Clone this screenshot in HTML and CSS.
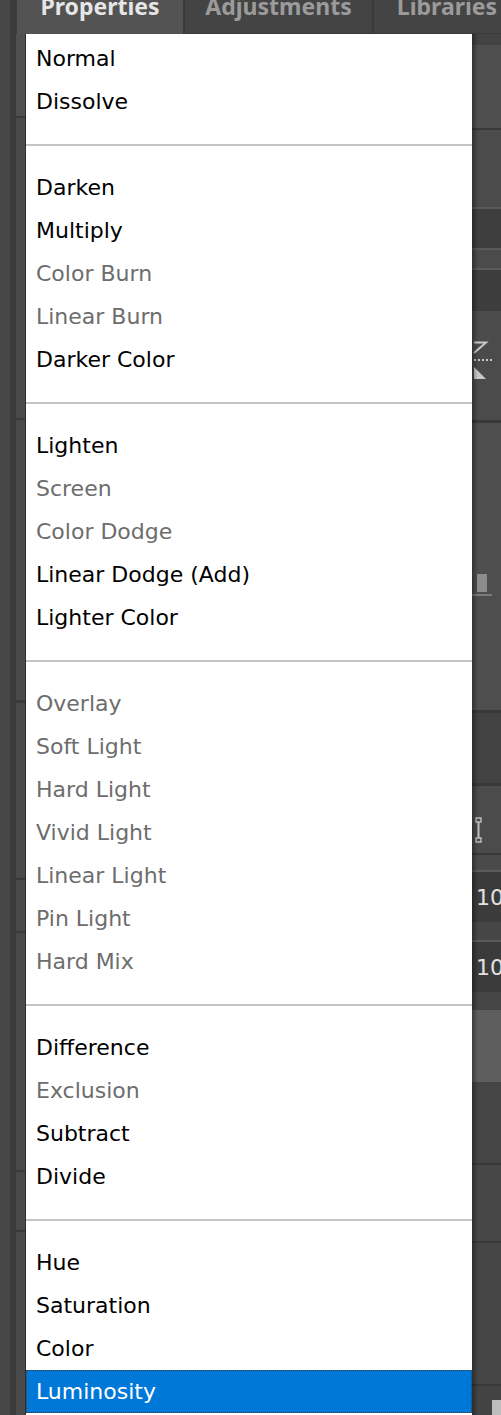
FILE: index.html
```html
<!DOCTYPE html>
<html>
<head>
<meta charset="utf-8">
<link rel="stylesheet" href="styles.css">
</head>
<body>
<div class="app">
  <div class="tabs">
    <div class="tab-gutter"><div class="g1"></div><div class="g2"></div></div>
    <div class="tab tab-props active"><span>Properties</span></div>
    <div class="tab tab-adj"><span>Adjustments</span></div>
    <div class="tab tab-lib"><span>Libraries</span></div>
  </div>
  <div class="main">
    <div class="left-rail">
      <div class="lr-a"></div>
      <div class="lr-b"></div>
      <div class="lr-c">
        <div class="lb lb1"></div>
        <div class="lb lb2"></div>
        <div class="lb lb3"></div>
        <div class="lb lb4"></div>
        <div class="lb lb5"></div>
        <div class="lb lb6"></div>
        <div class="lb lb7"></div>
        <div class="lb lb8"></div>
      </div>
    </div>

    <ul class="menu">
      <li class="item">Normal</li>
      <li class="item">Dissolve</li>
      <li class="sep"></li>
      <li class="item">Darken</li>
      <li class="item">Multiply</li>
      <li class="item off">Color Burn</li>
      <li class="item off">Linear Burn</li>
      <li class="item">Darker Color</li>
      <li class="sep"></li>
      <li class="item">Lighten</li>
      <li class="item off">Screen</li>
      <li class="item off">Color Dodge</li>
      <li class="item">Linear Dodge (Add)</li>
      <li class="item">Lighter Color</li>
      <li class="sep"></li>
      <li class="item off">Overlay</li>
      <li class="item off">Soft Light</li>
      <li class="item off">Hard Light</li>
      <li class="item off">Vivid Light</li>
      <li class="item off">Linear Light</li>
      <li class="item off">Pin Light</li>
      <li class="item off">Hard Mix</li>
      <li class="sep"></li>
      <li class="item">Difference</li>
      <li class="item off">Exclusion</li>
      <li class="item">Subtract</li>
      <li class="item">Divide</li>
      <li class="sep"></li>
      <li class="item">Hue</li>
      <li class="item">Saturation</li>
      <li class="item">Color</li>
      <li class="item selected">Luminosity</li>
    </ul>

    <div class="right-rail">
      <div class="rb c43 h11"></div>
      <div class="rb c4f h83"></div>
      <div class="rb line-d h2"></div>
      <div class="rb c4b h77"></div>
      <div class="rb line-l h2"></div>
      <div class="rb c3e h39"></div>
      <div class="rb line-l h2"></div>
      <div class="rb c4b h18"></div>
      <div class="rb line-l h2"></div>
      <div class="rb c3d h41"></div>
      <div class="rb c4b h109 flip">
        <svg width="22" height="42" viewBox="0 0 22 42">
          <path d="M1 2.5 H13 L1 13" fill="none" stroke="#c8c8c8" stroke-width="2"/>
          <path d="M1 20 H19" fill="none" stroke="#c8c8c8" stroke-width="2" stroke-dasharray="2 2"/>
          <polygon points="1,27 1,39 13,39" fill="#c8c8c8"/>
        </svg>
      </div>
      <div class="rb line-d h3"></div>
      <div class="rb c4e h287 slider">
        <div class="thumb"></div>
        <div class="track"></div>
      </div>
      <div class="rb line-d h3"></div>
      <div class="rb c42 h70"></div>
      <div class="rb line-d h3"></div>
      <div class="rb c4b h67 ibeam">
        <svg width="10" height="26" viewBox="0 0 10 26">
          <rect x="1" y="1" width="5" height="4" fill="none" stroke="#c0c0c0" stroke-width="1.4"/>
          <rect x="1" y="21" width="5" height="4" fill="none" stroke="#c0c0c0" stroke-width="1.4"/>
          <path d="M3.5 5 V21" stroke="#c0c0c0" stroke-width="2"/>
        </svg>
      </div>
      <div class="rb line-d h2"></div>
      <div class="rb c4a h15"></div>
      <div class="rb line-l h2"></div>
      <div class="rb field h50"><span>10</span></div>
      <div class="rb c46 h18"></div>
      <div class="rb line-l h2"></div>
      <div class="rb field h50"><span>10</span></div>
      <div class="rb c46 h18"></div>
      <div class="rb c5e h72"></div>
      <div class="rb c45 h81"></div>
      <div class="rb line-d h2"></div>
      <div class="rb c47 h76"></div>
      <div class="rb line-d h2"></div>
      <div class="rb c45 h141"></div>
      <div class="rb line-d h2"></div>
      <div class="rb c43 hrest bottom"><div class="nub"></div></div>
    </div>
  </div>
</div>
</body>
</html>
```

FILE: styles.css
```css
html, body {
  margin: 0;
  padding: 0;
}
body {
  width: 501px;
  height: 1415px;
  overflow: hidden;
  background: #484848;
  font-family: "DejaVu Sans", "Noto Sans", sans-serif;
}
.app {
  width: 501px;
  height: 1415px;
  display: flex;
  flex-direction: column;
  overflow: hidden;
}

/* Tabs */
.tabs {
  height: 34px;
  display: flex;
  flex-shrink: 0;
  background: #444444;
  overflow: hidden;
}
.tab-gutter {
  width: 17px;
  display: flex;
  flex-shrink: 0;
}
.tab-gutter .g1 { width: 10px; background: #474747; }
.tab-gutter .g2 { width: 7px; background: #3b3b3b; }
.tab {
  flex-shrink: 0;
  display: flex;
  justify-content: center;
  align-items: flex-start;
  background: #444444;
  border-bottom: 1px solid #3a3a3a;
  box-sizing: border-box;
  font-family: "Noto Sans", "DejaVu Sans", sans-serif;
  font-weight: bold;
  font-size: 23px;
  line-height: 23px;
  color: #9b9b9b;
}
.tab span {
  margin-top: -5px;
  white-space: nowrap;
}
.tab-props {
  width: 166px;
  background: #535353;
  border-bottom: none;
  color: #e6e6e6;
}
.tab-adj {
  width: 191px;
  border-left: 2px solid #3a3a3a;
  border-right: 2px solid #3a3a3a;
}
.tab-lib {
  width: 146px;
}

/* Main area */
.main {
  flex: 1;
  display: grid;
  grid-template-columns: 25px 447px 29px;
  min-height: 0;
}

/* Left rail */
.left-rail {
  display: grid;
  grid-template-columns: 10px 6px 9px;
}
.lr-a { background: #474747; }
.lr-b { background: #3b3b3b; }
.lr-c {
  display: flex;
  flex-direction: column;
  background: #4a4a4a;
}
.lb { border-bottom: 2px solid #3a3a3a; flex-shrink: 0; }
.lb1 { height: 82px; background: #505050; }
.lb2 { height: 300px; }
.lb3 { height: 280px; border-bottom-width: 3px; }
.lb4 { height: 175px; }
.lb5 { height: 51px; }
.lb6 { height: 237px; }
.lb7 { height: 58px; }
.lb8 { flex: 1; border-bottom: none; }

/* Menu */
.menu {
  list-style: none;
  margin: 0;
  padding: 3px 0 0 0;
  background: #ffffff;
  border-left: 1px solid #2e2e2e;
  overflow: hidden;
}
.item {
  height: 43px;
  line-height: 43px;
  padding-left: 10px;
  font-size: 22px;
  color: #000000;
  white-space: nowrap;
  box-sizing: border-box;
}
.item.off {
  color: #6d6d6d;
}
.item.selected {
  background: #0078d7;
  color: #ffffff;
  outline: 1px dotted #3a3a3a;
  outline-offset: -1px;
}
.sep {
  height: 43px;
  box-sizing: border-box;
  padding-top: 21px;
}
.sep::before {
  content: "";
  display: block;
  height: 2px;
  background: #c4c4c4;
}

/* Right rail */
.right-rail {
  display: flex;
  flex-direction: column;
  position: relative;
  overflow: hidden;
}
.right-rail::after {
  content: "";
  position: absolute;
  top: 0;
  bottom: 0;
  left: 0;
  width: 6px;
  background: linear-gradient(to right, rgba(0,0,0,0.35), rgba(0,0,0,0));
  pointer-events: none;
}
.rb { flex-shrink: 0; }
.h2 { height: 2px; }
.h3 { height: 3px; }
.h11 { height: 11px; }
.h15 { height: 15px; }
.h18 { height: 18px; }
.h39 { height: 39px; }
.h41 { height: 41px; }
.h50 { height: 50px; }
.h67 { height: 67px; }
.h70 { height: 70px; }
.h72 { height: 72px; }
.h76 { height: 76px; }
.h77 { height: 77px; }
.h81 { height: 81px; }
.h83 { height: 83px; }
.h109 { height: 109px; }
.h141 { height: 141px; }
.h287 { height: 287px; }
.hrest { flex: 1; }

.c3d { background: #3d3d3d; }
.c3e { background: #3e3e3e; }
.c42 { background: #424242; }
.c43 { background: #434343; }
.c45 { background: #454545; }
.c46 { background: #464646; }
.c47 { background: #474747; }
.c4a { background: #4a4a4a; }
.c4b { background: #4b4b4b; }
.c4e { background: #4e4e4e; }
.c4f { background: #4f4f4f; }
.c5e { background: #5e5e5e; }
.line-d { background: #383838; }
.line-l { background: #5a5a5a; }

.flip {
  padding: 29px 0 0 1px;
  box-sizing: border-box;
}
.flip svg { display: block; }

.slider {
  box-sizing: border-box;
  padding-top: 151px;
}
.slider .thumb {
  width: 10px;
  height: 18px;
  margin-left: 5px;
  background: #8c8c8c;
}
.slider .track {
  width: 20px;
  height: 2px;
  margin-top: 2px;
  background: #7a7a7a;
}

.ibeam {
  box-sizing: border-box;
  padding: 31px 0 0 3px;
}
.ibeam svg { display: block; }

.field {
  background: #3b3b3b;
  display: flex;
  align-items: center;
  padding-left: 4px;
  font-family: "DejaVu Sans", sans-serif;
  font-size: 22px;
  color: #e2e2e2;
  white-space: nowrap;
  overflow: hidden;
}

.bottom {
  box-sizing: border-box;
  padding: 14px 0 0 20px;
}
.bottom .nub {
  width: 9px;
  height: 15px;
  background: #bdbdbd;
}
```
